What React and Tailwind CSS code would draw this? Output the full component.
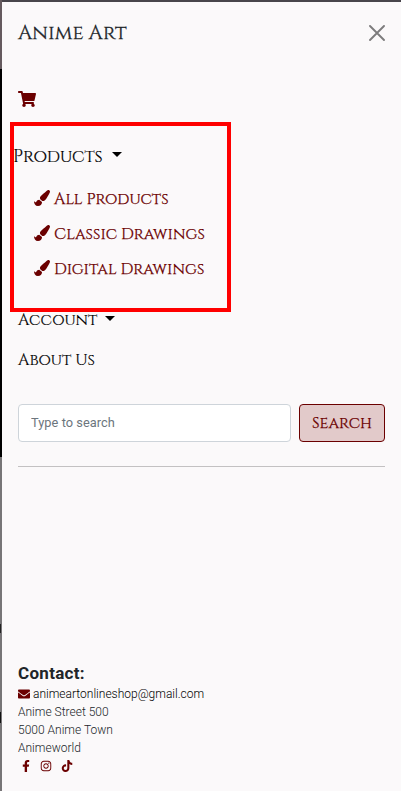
import React from "react";
import { FaShoppingCart, FaPaintBrush, FaEnvelope, FaFacebookF, FaInstagram } from "react-icons/fa";
import { FaTiktok } from "react-icons/fa6";

// Cinzel draws its lowercase letters as small capitals.
function Caps({ text, className = "" }) {
  return (
    <span className={`font-['Cinzel','Liberation_Serif',serif] whitespace-pre leading-none ${className}`}>{text}</span>
  );
}

function Caret({ className = "" }) {
  return <span className={`h-0 w-0 border-x-[5px] border-t-[5px] border-x-transparent border-t-black ${className}`} />;
}

function SubItem({ text }) {
  return (
    <a className="flex h-[35px] items-center gap-1 text-[#6b0000]">
      <FaPaintBrush className="mb-px h-4 w-4" />
      <Caps text={text} className="text-[16px] font-medium tracking-[0.07px] [-webkit-text-stroke:0.25px_#6b0000]" />
    </a>
  );
}

export default function App() {
  return (
    <div className="relative flex h-[791px] w-[401px] overflow-hidden bg-[#fbf9fa] font-['Roboto',sans-serif]">
      <div className="flex w-[2px] shrink-0 flex-col bg-[#777577]">
        <div className="h-[69px] bg-[#655a5e]" />
        <div className="h-[388px] bg-black" />
        <div className="mt-[167px] h-[9px] w-px bg-[#222]" />
        <div className="mt-[79px] h-[11px] w-px bg-[#111]" />
      </div>

      <div className="flex grow flex-col border-t-2 border-[#48454b] pr-4 pl-4">
        <header className="flex h-[62px] items-center justify-between">
          <Caps text="Anime Art" className="text-[20px] font-medium tracking-[0.1px] text-[#212529] [-webkit-text-stroke:0.3px_#212529]" />
          <svg viewBox="0 0 16 16" className="h-4 w-4 text-[#7d7c7d]" stroke="currentColor" strokeWidth="1.9" strokeLinecap="round">
            <path d="M1 1 15 15M15 1 1 15" />
          </svg>
        </header>

        <nav className="flex flex-col">
          <a className="mt-[15px] flex h-10 items-center">
            <FaShoppingCart className="h-4 w-[18px] text-[#6b0000]" />
          </a>
          <a className="-ml-[5px] mt-[17px] flex h-10 items-center gap-[9px]">
            <Caps text="Products" className="pt-[3px] text-[17.6px] text-black [-webkit-text-stroke:0.15px_#000]" />
            <Caret className="mb-[4px]" />
          </a>
          <div className="mt-[5px] flex flex-col pl-4">
            <SubItem text="All Products" />
            <SubItem text="Classic Drawings" />
            <SubItem text="Digital Drawings" />
          </div>
          <a className="mt-[14px] flex h-10 items-center gap-2">
            <Caps text="Account" className="text-[16px] text-black [-webkit-text-stroke:0.15px_#000]" />
            <Caret className="mb-[3px]" />
          </a>
          <a className="flex h-10 items-center">
            <Caps text="About Us" className="text-[16px] text-black [-webkit-text-stroke:0.15px_#000]" />
          </a>
        </nav>

        <form className="mt-6 flex h-[38px] gap-2">
          <input
            placeholder="Type to search"
            className="w-[273px] rounded-[4px] border border-[#ced4da] bg-white px-3 text-[12.8px] tracking-[0.05px] placeholder:text-[#6c757d]"
          />
          <button type="button" className="flex w-[86px] items-center justify-center rounded-[4px] border border-[#6b0000] bg-[#e2caca] text-[#6b0000]">
            <Caps text="Search" className="text-[16px] font-medium tracking-[0.1px] [-webkit-text-stroke:0.25px_#6b0000]" />
          </button>
        </form>
        <hr className="mt-6 border-[#c3c1c2]" />

        <footer className="mt-[195px] flex flex-col text-[12px] font-light leading-[18px] text-[#212529]">
          <h2 className="h-[23px] text-[17px] font-bold leading-[22px] tracking-[0.3px]">Contact:</h2>
          <a className="flex h-[18px] items-center gap-[3px] text-black">
            <FaEnvelope className="h-3 w-3 text-[#6b0000]" />
            animeartonlineshop@gmail.com
          </a>
          <span>Anime Street 500</span>
          <span>5000 Anime Town</span>
          <span>Animeworld</span>
          <div className="flex h-[18px] items-center text-[#6b0000]">
            <FaFacebookF className="ml-[2px] h-3 w-3" />
            <FaInstagram className="ml-2 h-3 w-3" />
            <FaTiktok className="ml-[9px] h-3 w-3" />
          </div>
        </footer>
      </div>

      <div className="absolute top-[122px] left-[10px] h-[190px] w-[221px] border-4 border-[#ff0000]" />
    </div>
  );
}
